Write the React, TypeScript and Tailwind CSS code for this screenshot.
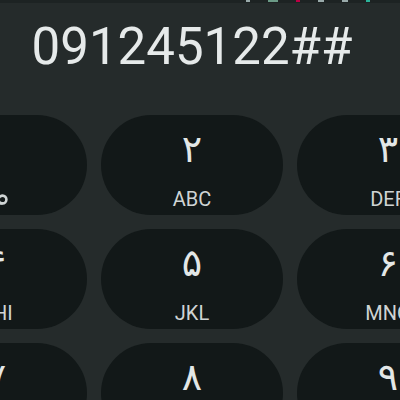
import React from 'react';

interface KeyProps {
  digit: string;
  label?: string;
  voicemail?: boolean;
}

const keys: KeyProps[] = [
  { digit: '۱', voicemail: true },
  { digit: '۲', label: 'ABC' },
  { digit: '۳', label: 'DEF' },
  { digit: '۴', label: 'GHI' },
  { digit: '۵', label: 'JKL' },
  { digit: '۶', label: 'MNO' },
  { digit: '۷', label: 'PQRS' },
  { digit: '۸', label: 'TUV' },
  { digit: '۹', label: 'WXYZ' },
];

const VoicemailIcon: React.FC = () => (
  <svg className="w-[24px] h-[13px]" viewBox="0 0 22 12" fill="none" stroke="currentColor" strokeWidth={2.4}>
    <circle cx="5" cy="6" r="3.6" />
    <circle cx="17" cy="6" r="3.6" />
    <path d="M5 9.6h12" />
  </svg>
);

const DialKey: React.FC<KeyProps> = ({ digit, label, voicemail }) => (
  <div className="h-[100px] rounded-full bg-[#121818] flex flex-col items-center">
    <span className="mt-[10px] h-[48px] text-[38px] leading-[48px] text-[#e3e7e7] font-['DejaVu_Sans',sans-serif]">
      {digit}
    </span>
    <div className="mt-[16px] h-[20px] flex items-center text-[#cfd4d4]">
      {voicemail ? (
        <VoicemailIcon />
      ) : (
        <span className="text-[20px] leading-[20px] font-['Roboto',sans-serif]">{label}</span>
      )}
    </div>
  </div>
);

export default function App() {
  return (
    <div className="w-[400px] h-[400px] overflow-hidden bg-[#252b2b] font-['Roboto',sans-serif]">
      {/* cut-off status bar */}
      <div className="h-[3px] bg-[#1d2323] flex items-start pl-[246px] gap-[18px]">
        <span className="w-[4px] h-[2px] bg-[#9aa]" />
        <span className="w-[10px] h-[2px] bg-[#6b9a86]" />
        <span className="w-[4px] h-[2px] bg-[#b04]" />
        <span className="w-[6px] h-[2px] bg-[#9aa]" />
        <span className="w-[6px] h-[2px] bg-[#9aa]" />
        <span className="w-[4px] h-[2px] bg-[#2bb39a]" />
      </div>
      <div className="w-[574px] ml-[-95px]">
        <div className="mt-[18px] h-[52px] text-center text-[51px] leading-[52px] text-[#e6eaea]">
          091245122##
        </div>
        <div className="mt-[42px] grid grid-cols-3 gap-[14px]">
          {keys.map((k) => (
            <DialKey key={k.digit} {...k} />
          ))}
        </div>
      </div>
    </div>
  );
}
